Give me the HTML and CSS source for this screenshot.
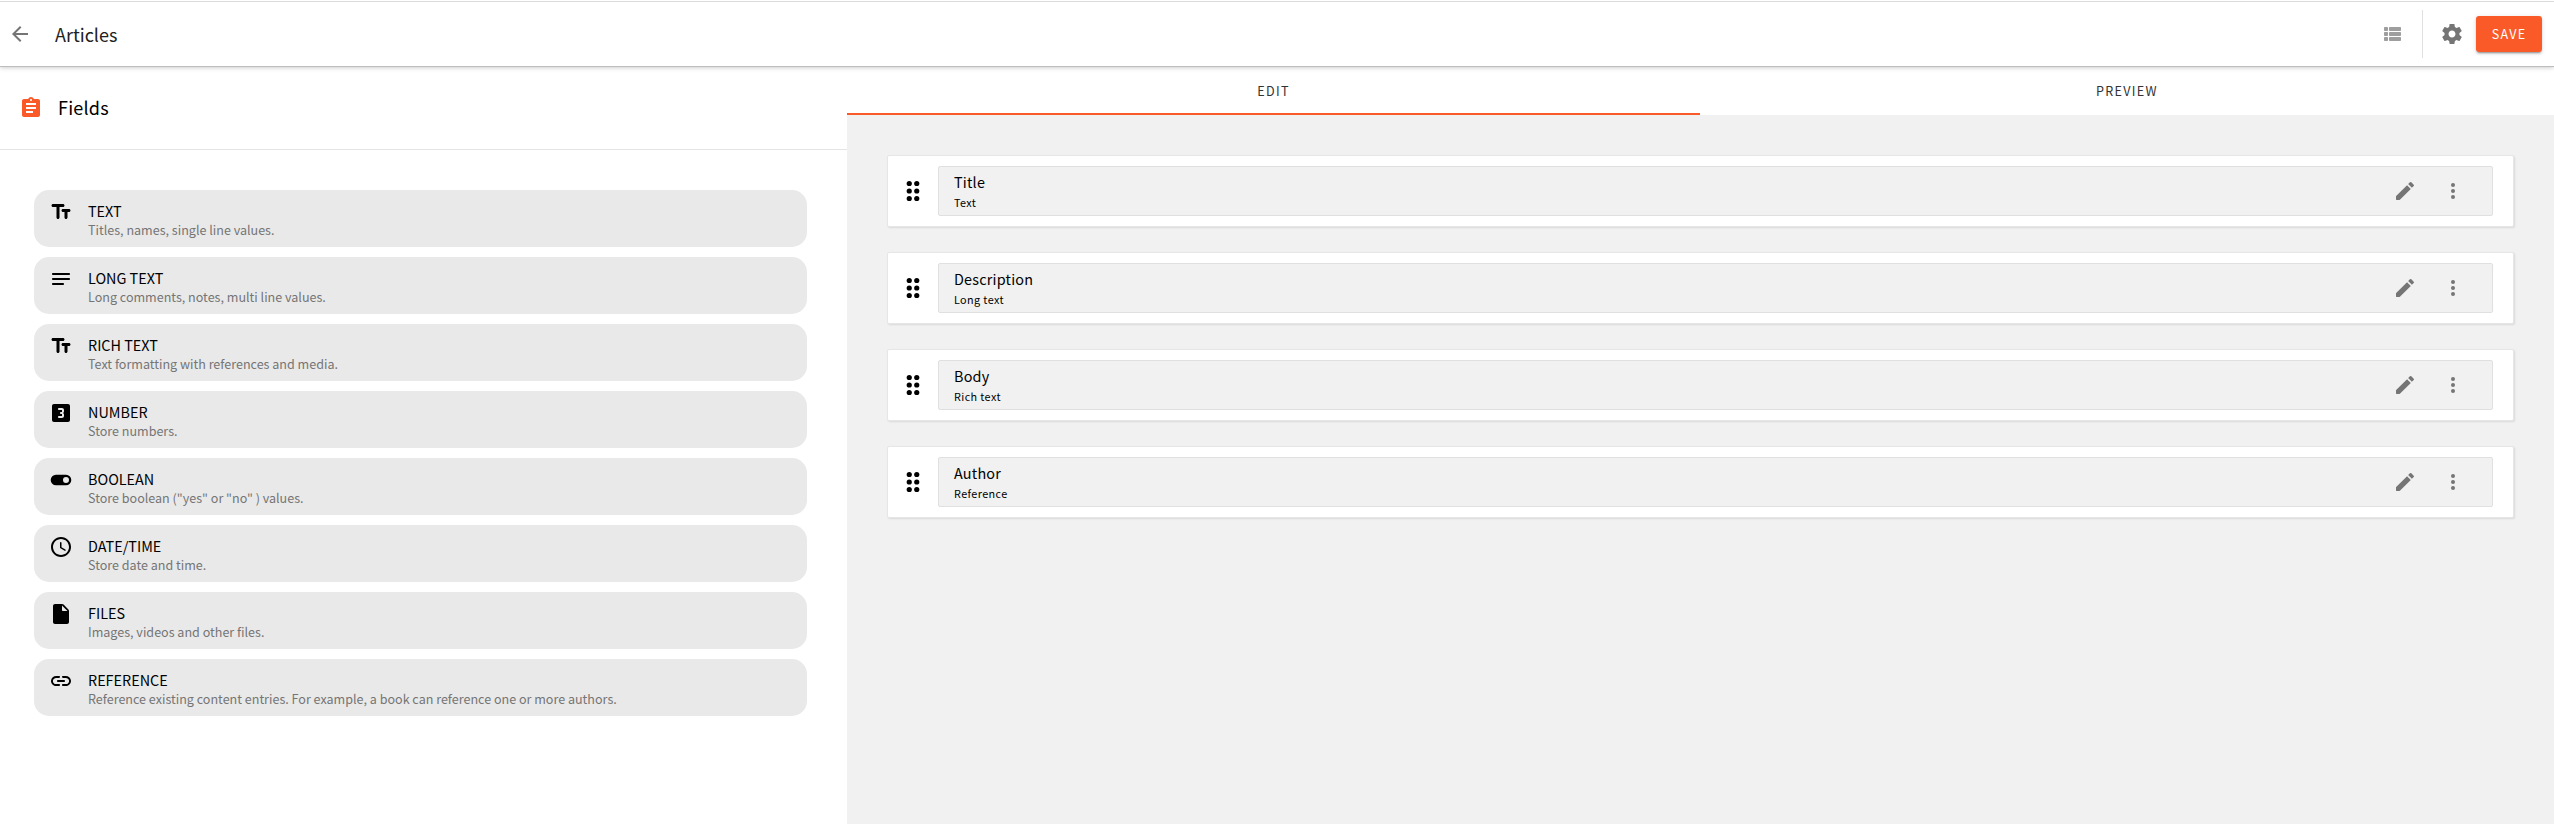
FILE: index.html
```
<!DOCTYPE html>
<html lang="en">
<head>
<meta charset="utf-8">
<title>Articles</title>
<link rel="stylesheet" href="styles.css">
</head>
<body>
<svg class="sprite" aria-hidden="true">
  <symbol id="text" viewBox="0 0 24 24"><path d="M2.500 5.500c0 .83.67 1.500 1.500 1.500H7.500v10.500c0 .83.67 1.500 1.500 1.500s1.500-.67 1.500-1.500V7h3.500c.83 0 1.500-.67 1.500-1.500S14.830 4 14 4H4c-.83 0-1.500.67-1.500 1.500zM20 9h-6c-.83 0-1.500.67-1.500 1.500S13.170 12 14 12h1.500v5.500c0 .83.67 1.500 1.500 1.500s1.500-.67 1.500-1.500V12H20c.83 0 1.500-.67 1.500-1.500S20.830 9 20 9z"/></symbol>
  <symbol id="notes" viewBox="0 0 24 24"><path d="M20 11H4c-.55 0-1 .45-1 1s.45 1 1 1h16c.55 0 1-.45 1-1s-.45-1-1-1zM4 18h10c.55 0 1-.45 1-1s-.45-1-1-1H4c-.55 0-1 .45-1 1s.45 1 1 1zM20 6H4c-.55 0-1 .45-1 1s.45 1 1 1h16c.55 0 1-.45 1-1s-.45-1-1-1z"/></symbol>
  <symbol id="three" viewBox="0 0 24 24"><path d="M19 3H5c-1.100 0-2 .9-2 2v14c0 1.100.9 2 2 2h14c1.100 0 2-.9 2-2V5c0-1.100-.9-2-2-2zm-4 7.500c0 .83-.67 1.500-1.500 1.500.83 0 1.500.67 1.500 1.500V15c0 1.110-.9 2-2 2h-3c-.55 0-1-.45-1-1s.45-1 1-1h3v-2h-1c-.55 0-1-.45-1-1s.45-1 1-1h1V9h-3c-.55 0-1-.45-1-1s.45-1 1-1h3c1.100 0 2 .89 2 2v1.500z"/></symbol>
  <symbol id="toggle" viewBox="0 0 24 24"><path fill-rule="evenodd" d="M7 6.700h10a5.300 5.300 0 0 1 0 10.600H7A5.300 5.300 0 0 1 7 6.700zM17 9a3 3 0 1 0 0 6 3 3 0 0 0 0-6z"/></symbol>
  <symbol id="clock" viewBox="0 0 24 24"><path d="M11.990 2C6.470 2 2 6.480 2 12s4.470 10 9.990 10C17.520 22 22 17.520 22 12S17.520 2 11.990 2zM12 20c-4.420 0-8-3.580-8-8s3.580-8 8-8 8 3.580 8 8-3.580 8-8 8zm-.22-13h-.06c-.4 0-.72.32-.72.72v4.720c0 .35.18.68.49.86l4.150 2.490c.34.2.78.1.98-.24.21-.34.1-.79-.25-.99l-3.870-2.300V7.720c0-.4-.32-.72-.72-.72z"/></symbol>
  <symbol id="file" viewBox="0 0 24 24"><path d="M6 2c-1.100 0-1.990.9-1.990 2L4 20c0 1.100.89 2 1.990 2H18c1.100 0 2-.9 2-2V8.830c0-.53-.21-1.040-.59-1.410l-4.830-4.830c-.37-.38-.88-.59-1.410-.59H6zm7 6V3.500L18.500 9H14c-.55 0-1-.45-1-1z"/></symbol>
  <symbol id="link" viewBox="0 0 24 24"><path d="M3.960 11.380C4.240 9.910 5.620 8.900 7.120 8.900h2.930c.52 0 .95-.43.95-.95S10.570 7 10.050 7H7.220c-2.610 0-4.940 1.910-5.190 4.510C1.740 14.490 4.080 17 7 17h3.050c.52 0 .95-.43.95-.95s-.43-.95-.95-.95H7c-1.910 0-3.420-1.740-3.040-3.720zM9 13h6c.55 0 1-.45 1-1s-.45-1-1-1H9c-.55 0-1 .45-1 1s.45 1 1 1zm7.780-6h-2.830c-.52 0-.95.43-.95.950s.43.95.95.95h2.930c1.500 0 2.880 1.010 3.160 2.480.38 1.980-1.130 3.720-3.040 3.720h-3.050c-.52 0-.95.43-.95.95s.43.95.95.95H17c2.920 0 5.260-2.510 4.980-5.490-.25-2.600-2.590-4.510-5.200-4.510z"/></symbol>
  <symbol id="drag" viewBox="0 0 24 24"><circle cx="8.250" cy="4.500" r="2.600"/><circle cx="15.750" cy="4.500" r="2.600"/><circle cx="8.250" cy="12" r="2.600"/><circle cx="15.750" cy="12" r="2.600"/><circle cx="8.250" cy="19.500" r="2.600"/><circle cx="15.750" cy="19.500" r="2.600"/></symbol>
  <symbol id="edit" viewBox="0 0 24 24"><path d="M3 17.460v3.040c0 .28.22.5.5.5h3.040c.13 0 .26-.05.35-.15L17.810 9.940l-3.750-3.750L3.150 17.100c-.1.100-.15.220-.15.360zM20.710 7.040a1 1 0 0 0 0-1.410l-2.340-2.340a1 1 0 0 0-1.410 0l-1.830 1.830 3.750 3.750 1.830-1.830z"/></symbol>
  <symbol id="more" viewBox="0 0 24 24"><circle cx="12" cy="6" r="2"/><circle cx="12" cy="12" r="2"/><circle cx="12" cy="18" r="2"/></symbol>
</svg>

<header class="topbar">
  <svg class="icon icon-muted" viewBox="0 0 24 24"><path d="M20 11H7.830l5.590-5.590L12 4l-8 8 8 8 1.410-1.410L7.830 13H20v-2z"/></svg>
  <h1 class="topbar-title">Articles</h1>
  <div class="topbar-actions">
    <svg class="icon icon-light" viewBox="0 0 24 24"><path d="M5 15h2c.55 0 1 .45 1 1v2c0 .55-.45 1-1 1H5c-.55 0-1-.45-1-1v-2c0-.55.45-1 1-1zm0-5h2c.55 0 1 .45 1 1v2c0 .55-.45 1-1 1H5c-.55 0-1-.45-1-1v-2c0-.55.45-1 1-1zm0-5h2c.55 0 1 .45 1 1v2c0 .55-.45 1-1 1H5c-.55 0-1-.45-1-1V6c0-.55.45-1 1-1zm5 10h10c.55 0 1 .45 1 1v2c0 .55-.45 1-1 1H10c-.55 0-1-.45-1-1v-2c0-.55.45-1 1-1zm0-5h10c.55 0 1 .45 1 1v2c0 .55-.45 1-1 1H10c-.55 0-1-.45-1-1v-2c0-.55.45-1 1-1zm0-5h10c.55 0 1 .45 1 1v2c0 .55-.45 1-1 1H10c-.55 0-1-.45-1-1V6c0-.55.45-1 1-1z"/></svg>
    <span class="divider"></span>
    <svg class="icon icon-muted" viewBox="0 0 24 24"><path d="M19.430 12.980c.04-.32.07-.64.07-.98s-.03-.66-.07-.98l2.110-1.650c.19-.15.24-.42.12-.64l-2-3.460c-.12-.22-.39-.3-.61-.22l-2.490 1c-.52-.4-1.080-.73-1.690-.98l-.38-2.650C14.460 2.180 14.250 2 14 2h-4c-.25 0-.46.18-.49.42l-.38 2.650c-.61.25-1.170.59-1.690.98l-2.490-1c-.23-.09-.49 0-.61.22l-2 3.460c-.13.22-.07.49.12.64l2.110 1.650c-.04.32-.07.65-.07.98s.03.66.07.98l-2.110 1.650c-.19.15-.24.42-.12.64l2 3.460c.12.22.39.3.61.22l2.490-1c.52.4 1.080.73 1.690.98l.38 2.650c.03.24.24.42.49.42h4c.25 0 .46-.18.49-.42l.38-2.650c.61-.25 1.170-.59 1.690-.98l2.490 1c.23.09.49 0 .61-.22l2-3.460c.12-.22.07-.49-.12-.64l-2.110-1.650zM12 15.500c-1.930 0-3.500-1.570-3.500-3.500s1.570-3.500 3.500-3.500 3.500 1.570 3.500 3.500-1.570 3.500-3.500 3.500z"/></svg>
    <button class="save">SAVE</button>
  </div>
</header>

<main class="editor">
  <aside class="sidebar">
    <div class="sidebar-head">
      <svg class="icon icon-primary" viewBox="0 0 24 24"><path d="M19 3h-4.180C14.400 1.840 13.300 1 12 1s-2.400.84-2.820 2H5c-1.100 0-2 .9-2 2v14c0 1.100.9 2 2 2h14c1.100 0 2-.9 2-2V5c0-1.100-.9-2-2-2zm-7 0c.55 0 1 .45 1 1s-.45 1-1 1-1-.45-1-1 .45-1 1-1zm2 14H7v-2h7v2zm3-4H7v-2h10v2zm0-4H7V7h10v2z"/></svg>
      <h2 class="sidebar-title">Fields</h2>
    </div>
    <ul class="types">
      <li class="type"><svg class="icon"><use href="#text"/></svg><div><div class="type-name">TEXT</div><div class="type-desc">Titles, names, single line values.</div></div></li>
      <li class="type"><svg class="icon"><use href="#notes"/></svg><div><div class="type-name">LONG TEXT</div><div class="type-desc">Long comments, notes, multi line values.</div></div></li>
      <li class="type"><svg class="icon"><use href="#text"/></svg><div><div class="type-name">RICH TEXT</div><div class="type-desc">Text formatting with references and media.</div></div></li>
      <li class="type"><svg class="icon"><use href="#three"/></svg><div><div class="type-name">NUMBER</div><div class="type-desc">Store numbers.</div></div></li>
      <li class="type"><svg class="icon"><use href="#toggle"/></svg><div><div class="type-name">BOOLEAN</div><div class="type-desc">Store boolean ("yes" or "no" ) values.</div></div></li>
      <li class="type"><svg class="icon"><use href="#clock"/></svg><div><div class="type-name">DATE/TIME</div><div class="type-desc">Store date and time.</div></div></li>
      <li class="type"><svg class="icon"><use href="#file"/></svg><div><div class="type-name">FILES</div><div class="type-desc">Images, videos and other files.</div></div></li>
      <li class="type"><svg class="icon"><use href="#link"/></svg><div><div class="type-name">REFERENCE</div><div class="type-desc">Reference existing content entries. For example, a book can reference one or more authors.</div></div></li>
    </ul>
  </aside>

  <section class="content">
    <nav class="tabs">
      <div class="tab tab-active">EDIT</div>
      <div class="tab">PREVIEW</div>
    </nav>
    <div class="rows">
      <div class="row"><svg class="icon"><use href="#drag"/></svg><div class="field"><div class="field-text"><div class="field-name">Title</div><div class="field-type">Text</div></div><svg class="icon icon-muted"><use href="#edit"/></svg><svg class="icon icon-muted"><use href="#more"/></svg></div></div>
      <div class="row"><svg class="icon"><use href="#drag"/></svg><div class="field"><div class="field-text"><div class="field-name">Description</div><div class="field-type">Long text</div></div><svg class="icon icon-muted"><use href="#edit"/></svg><svg class="icon icon-muted"><use href="#more"/></svg></div></div>
      <div class="row"><svg class="icon"><use href="#drag"/></svg><div class="field"><div class="field-text"><div class="field-name">Body</div><div class="field-type">Rich text</div></div><svg class="icon icon-muted"><use href="#edit"/></svg><svg class="icon icon-muted"><use href="#more"/></svg></div></div>
      <div class="row"><svg class="icon"><use href="#drag"/></svg><div class="field"><div class="field-text"><div class="field-name">Author</div><div class="field-type">Reference</div></div><svg class="icon icon-muted"><use href="#edit"/></svg><svg class="icon icon-muted"><use href="#more"/></svg></div></div>
    </div>
  </section>
</main>
</body>
</html>
```
FILE: styles.css
```
* { box-sizing: border-box; }
body {
  margin: 0;
  height: 824px;
  display: flex;
  flex-direction: column;
  overflow: hidden;
  background: #fff;
  color: #000;
  font-family: "Noto Sans CJK SC", "Noto Sans", sans-serif;
}
h1, h2, ul { margin: 0; padding: 0; font-weight: 400; list-style: none; }
.sprite { display: none; }
.icon { width: 24px; height: 24px; flex: none; display: block; fill: currentColor; }
.icon-muted { color: #757575; }
.icon-light { color: #9e9e9e; }
.icon-primary { color: #fa5a28; }

.topbar {
  position: relative;
  z-index: 1;
  flex: none;
  height: 66px;
  padding: 0 12px 0 8px;
  border-top: 1px solid #fff;
  box-shadow: inset 0 1px 0 #dcdcdc, 0 1px 0 #bdbdbd, 0 1px 5px rgba(0, 0, 0, .28);
  display: flex;
  align-items: center;
  background: #fff;
}
.topbar-title {
  margin-left: 23px;
  padding-top: 1px;
  font-size: 18px;
  line-height: 28px;
  color: #212121;
}
.topbar-actions { margin-left: auto; display: flex; align-items: center; }
.divider { width: 1px; height: 48px; margin: 0 17px 0 18px; background: #e0e0e0; }
.save {
  width: 66px;
  height: 36px;
  margin-left: 12px;
  padding: 0;
  border: 0;
  border-radius: 3px;
  background: #fa5a28;
  color: #fff;
  font: 400 12.6px/36px "Noto Sans CJK SC", sans-serif;
  letter-spacing: 1.25px;
  box-shadow: 0 3px 1px -2px rgba(0,0,0,.2), 0 2px 2px rgba(0,0,0,.14), 0 1px 5px rgba(0,0,0,.12);
}

.editor { flex: 1; display: grid; grid-template-columns: 847px 1fr; padding-top: 1px; }
.sidebar-head {
  height: 83px;
  padding: 0 19px;
  border-bottom: 1px solid #e4e4e4;
  display: flex;
  align-items: center;
}
.sidebar-title { margin-left: 15px; padding-bottom: 2px; font-size: 18px; line-height: 28px; letter-spacing: .2px; }
.types { padding: 40px 40px 0 34px; display: flex; flex-direction: column; gap: 10px; }
.type {
  height: 57px;
  padding: 10px 15px;
  border-radius: 15px;
  background: #e9e9e9;
  display: flex;
  gap: 15px;
}
.type-name { font-size: 14.4px; line-height: 22px; }
.type-desc { font-size: 12.55px; line-height: 16px; color: #757575; }

.content { background: #f1f1f1; }
.tabs { height: 48px; display: grid; grid-template-columns: 853px 1fr; background: #fff; }
.tab {
  text-align: center;
  font-size: 12.6px;
  line-height: 48px;
  letter-spacing: 1.3px;
  color: #333;
}
.tab-active { box-shadow: inset 0 -2px 0 #fa5a28; }
.rows { padding: 40px 40px 0; display: flex; flex-direction: column; gap: 25px; }
.row {
  height: 72px;
  padding: 0 20px 0 13px;
  display: flex;
  align-items: center;
  gap: 13px;
  background: #fff;
  border: 1px solid #e6e6e6;
  border-radius: 2px;
  box-shadow: 1px 1px 2px rgba(0,0,0,.1);
}
.field {
  flex: 1;
  height: 50px;
  padding: 0 27px 0 15px;
  border: 1px solid #e0e0e0;
  border-radius: 2px;
  background: #f1f1f1;
  display: flex;
  align-items: center;
  gap: 24px;
}
.field-text { flex: 1; }
.field-name { font-size: 14.4px; line-height: 22px; letter-spacing: .2px; }
.field-type { font-size: 10.8px; line-height: 18px; letter-spacing: .4px; }
```
